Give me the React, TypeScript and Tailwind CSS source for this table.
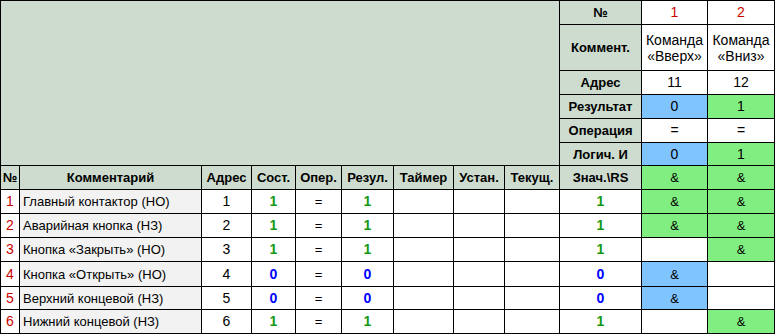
import React from "react";

const GRAY = "bg-[#CDDCCE]";
const BLUE = "bg-[#80C4FF]";
const GREEN = "bg-[#80EE80]";

const rows = [
  { n: 1, c: "Главный контактор (НО)", a: 1, v: 1, g1: true, g2: true },
  { n: 2, c: "Аварийная кнопка (НЗ)", a: 2, v: 1, g1: true, g2: true },
  { n: 3, c: "Кнопка «Закрыть» (НО)", a: 3, v: 1, g1: false, g2: true },
  { n: 4, c: "Кнопка «Открыть» (НО)", a: 4, v: 0, g1: true, g2: false },
  { n: 5, c: "Верхний концевой (НЗ)", a: 5, v: 0, g1: true, g2: false },
  { n: 6, c: "Нижний концевой (НЗ)", a: 6, v: 1, g1: false, g2: true },
];

function C({ children, className = "" }: { children?: React.ReactNode; className?: string }) {
  return <div className={`flex items-center justify-center text-center ${className}`}>{children}</div>;
}

export default function App() {
  const valCls = (v: number) =>
    v === 1 ? "font-bold text-[#149A14]" : "font-bold text-[#0000FF]";
  return (
    <div
      className="w-[775px] h-[334px] bg-black p-px grid gap-px grid-cols-[18px_181px_49px_43px_45px_51px_59px_50px_54px_81px_65px_66px] grid-rows-[23px_45px_23px_23px_23px_22px_23px_23px_23px_23px_24px_22px_23px] text-[13px] leading-[15px] text-black"
      style={{ fontFamily: '"Liberation Sans", Arial, sans-serif' }}
    >
      <div className={`col-span-9 row-span-6 ${GRAY}`} />
      {/* top right block */}
      <C className={`${GRAY} font-bold`}>№</C>
      <C className="bg-white text-[14px] text-[#CC0000]">1</C>
      <C className="bg-white text-[14px] text-[#CC0000]">2</C>

      <C className={`${GRAY} font-bold`}>Коммент.</C>
      <C className="bg-white text-[14px] leading-[16px]">Команда<br />«Вверх»</C>
      <C className="bg-white text-[14px] leading-[16px]">Команда<br />«Вниз»</C>

      <C className={`${GRAY} font-bold`}>Адрес</C>
      <C className="bg-white text-[14px]">11</C>
      <C className="bg-white text-[14px]">12</C>

      <C className={`${GRAY} font-bold`}>Результат</C>
      <C className={`${BLUE} text-[14px]`}>0</C>
      <C className={`${GREEN} text-[14px]`}>1</C>

      <C className={`${GRAY} font-bold`}>Операция</C>
      <C className="bg-white text-[14px]">=</C>
      <C className="bg-white text-[14px]">=</C>

      <C className={`${GRAY} font-bold`}>Логич. И</C>
      <C className={`${BLUE} text-[14px]`}>0</C>
      <C className={`${GREEN} text-[14px]`}>1</C>

      {/* header row */}
      {["№", "Комментарий", "Адрес", "Сост.", "Опер.", "Резул.", "Таймер", "Устан.", "Текущ.", "Знач.\\RS"].map((h) => (
        <C key={h} className={`${GRAY} font-bold`}>{h}</C>
      ))}
      <C className={GREEN}>&amp;</C>
      <C className={GREEN}>&amp;</C>

      {rows.map((r) => (
        <React.Fragment key={r.n}>
          <C className="bg-white text-[14px] text-[#CC0000]">{r.n}</C>
          <div className="bg-[#F2F2F2] flex items-center pl-[3px] whitespace-nowrap">{r.c}</div>
          <C className="bg-white text-[14px]">{r.a}</C>
          <C className={`bg-white text-[14px] ${valCls(r.v)}`}>{r.v}</C>
          <C className="bg-white">=</C>
          <C className={`bg-white text-[14px] ${valCls(r.v)}`}>{r.v}</C>
          <C className="bg-white" />
          <C className="bg-white" />
          <C className="bg-white" />
          <C className={`bg-white text-[14px] ${valCls(r.v)}`}>{r.v}</C>
          <C className={r.g1 ? (r.v === 1 ? GREEN : BLUE) : "bg-white"}>{r.g1 ? "&" : ""}</C>
          <C className={r.g2 ? GREEN : "bg-white"}>{r.g2 ? "&" : ""}</C>
        </React.Fragment>
      ))}
    </div>
  );
}
